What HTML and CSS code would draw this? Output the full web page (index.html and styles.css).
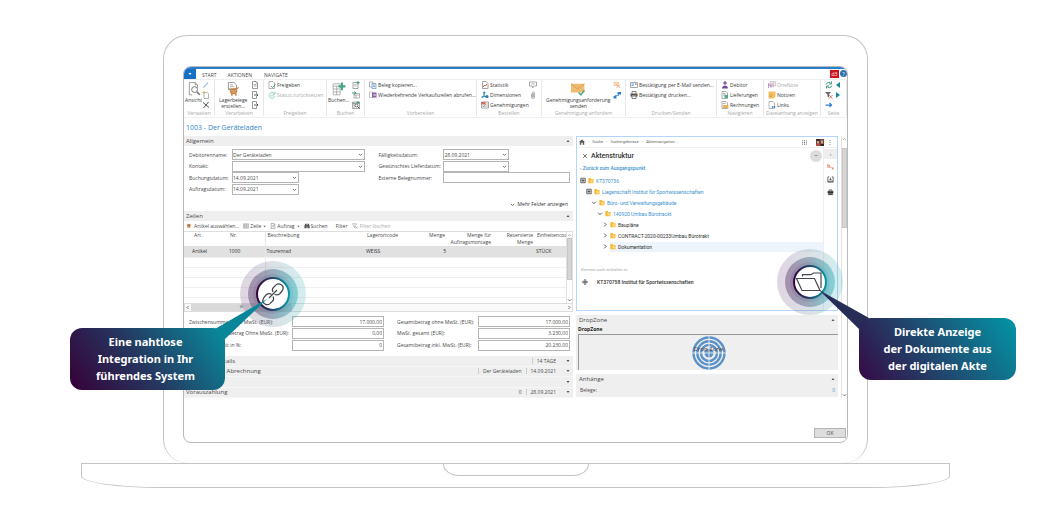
FILE: index.html
```html
<!DOCTYPE html>
<html lang="de">
<head>
<meta charset="utf-8">
<title>1003 - Der Geräteladen</title>
<link rel="stylesheet" href="styles.css">
</head>
<body>
<svg class="defs" aria-hidden="true">
  <defs>
    <linearGradient id="ring" x1="0" y1="0" x2="1" y2="0"><stop offset="0" stop-color="#35063e"/><stop offset=".5" stop-color="#24466c"/><stop offset="1" stop-color="#0797a6"/></linearGradient>
    <linearGradient id="mid" x1="0" y1="0" x2="1" y2="0"><stop offset="0" stop-color="#6d4377"/><stop offset=".5" stop-color="#58748f"/><stop offset="1" stop-color="#35b7be"/></linearGradient>
  </defs>
  <symbol id="chev" viewBox="0 0 8 8"><path d="M1.500 3 4 5.500 6.500 3" fill="none" stroke="#555" stroke-width="1.300"/></symbol>
  <symbol id="chevr" viewBox="0 0 8 8"><path d="M3 1.500 5.500 4 3 6.500" fill="none" stroke="#555" stroke-width="1.300"/></symbol>
  <symbol id="chevu" viewBox="0 0 8 8"><path d="M1.500 5.500 4 3l2.500 2.500" fill="none" stroke="#888" stroke-width="1.100"/></symbol>
  <symbol id="up" viewBox="0 0 8 8"><path d="M1 6 4 2l3 4z" fill="#555"/></symbol>
  <symbol id="down" viewBox="0 0 8 8"><path d="M1 2 4 6l3-4z" fill="#555"/></symbol>
  <symbol id="doc" viewBox="0 0 16 16"><path d="M3 1h7l3 3v11H3z" fill="#fff" stroke="#666" stroke-width="1.300"/><path d="M10 1v3h3M5 7h6M5 10h6" fill="none" stroke="#666"/></symbol>
  <symbol id="docgo" viewBox="0 0 16 16"><path d="M11 5V1H3v14h8v-4" fill="#fff" stroke="#666" stroke-width="1.300"/><path d="M6 8h8M11 5l3 3-3 3" fill="none" stroke="#444" stroke-width="1.700"/></symbol>
  <symbol id="docgreen" viewBox="0 0 16 16"><path d="M2 3h10v12H2z" fill="#fff" stroke="#777" stroke-width="1.300"/><path d="M4 7h5M4 10h5" stroke="#777"/><path d="M12 0v7M8.500 3.500h7" stroke="#3c9b76" stroke-width="2"/></symbol>
  <symbol id="postsend" viewBox="0 0 16 16"><path d="M4 5h11v9H4zM4 8h11M8 8v6" fill="#fff" stroke="#888" stroke-width="1.200"/><path d="M0 4h8M5 1l3 3-3 3" fill="none" stroke="#3c9b76" stroke-width="2"/></symbol>
  <symbol id="preview" viewBox="0 0 16 16"><path d="M1 2h14v13H1zM4 2v13M1 5h14" fill="#fff" stroke="#777" stroke-width="1.200"/><circle cx="9" cy="9" r="3" fill="#fff" stroke="#444" stroke-width="1.500"/><path d="M11 11l4 4" stroke="#444" stroke-width="2"/><path d="M12 0v6M9 3h6" stroke="#3c9b76" stroke-width="1.800"/></symbol>
  <symbol id="doccheck" viewBox="0 0 16 16"><path d="M2 1h8l3 3v11H2z" fill="#fff" stroke="#888" stroke-width="1.300"/><path d="M6 10l3 3 6-6" fill="none" stroke="#3c9b76" stroke-width="2"/></symbol>
  <symbol id="undo" viewBox="0 0 16 16"><path d="M13 5a6 6 0 1 0 1 5M14 1v5H9M5 8l3 3 6-7" fill="none" stroke="#8fcbb0" stroke-width="1.700"/></symbol>
  <symbol id="view" viewBox="0 0 24 24"><path d="M4 1h10l4 4v5M9 22H4V1M14 1v4h4" fill="#fff" stroke="#777" stroke-width="1.200"/><circle cx="13" cy="13" r="5" fill="#fff" stroke="#666" stroke-width="1.500"/><path d="M17 17l5 5" stroke="#666" stroke-width="2.500"/></symbol>
  <symbol id="pencil" viewBox="0 0 16 16"><path d="M3 13 12 3" stroke="#a5c6e2" stroke-width="2.500"/></symbol>
  <symbol id="new" viewBox="0 0 16 16"><path d="M4 3h6l3 3v9H4z" fill="#fff" stroke="#888" stroke-width="1.300"/><path d="M4 0v6M1 3h6" stroke="#eaa658" stroke-width="1.800"/></symbol>
  <symbol id="del" viewBox="0 0 16 16"><path d="M2 3l12 10M13 2 3 14" stroke="#555" stroke-width="2"/></symbol>
  <symbol id="store" viewBox="0 0 24 24"><path d="M4 1h10l4 4v8H4z" fill="#fff" stroke="#777" stroke-width="1.300"/><path d="M7 5h5M7 8h7" stroke="#777"/><path d="M5 12h14l3-3M7 15h12l-2 5H9z" fill="#e0a06a" stroke="#b8702f" stroke-width="1.500"/><circle cx="10" cy="22" r="1.500" fill="#b8702f"/><circle cx="17" cy="22" r="1.500" fill="#b8702f"/></symbol>
  <symbol id="post" viewBox="0 0 24 24"><path d="M2 3h12v19H2zM2 7h12M8 7v15M2 12h12M2 17h12" fill="#fff" stroke="#999" stroke-width="1.200"/><path d="M17 1v13M11 7.500h12" stroke="#45a883" stroke-width="3.500"/></symbol>
  <symbol id="copy" viewBox="0 0 16 16"><path d="M1 2h7v10H1z" fill="#fff" stroke="#888" stroke-width="1.200"/><path d="M6 5h8v10H6zM8 8h4M8 11h4" fill="#e5effa" stroke="#4a86bd" stroke-width="1.200"/></symbol>
  <symbol id="recur" viewBox="0 0 16 16"><path d="M1 2h6v11H1z" fill="#fff" stroke="#888"/><path d="M6 3h9v10H6z" fill="#8b5fa8"/><path d="M8 8h5M11 6l2 2-2 2" fill="none" stroke="#fff" stroke-width="1.300"/></symbol>
  <symbol id="stat" viewBox="0 0 16 16"><path d="M3 1h7l4 4v10H3z" fill="#fff" stroke="#777" stroke-width="1.300"/><path d="M4 12l3-4 2 2 3-4" fill="none" stroke="#d6533a" stroke-width="2"/></symbol>
  <symbol id="dim" viewBox="0 0 16 16"><path d="M6 2v8l-4 3M6 10l8 3" fill="none" stroke="#2c7faa" stroke-width="2.200"/><circle cx="7" cy="3" r="2" fill="#2c7faa"/><circle cx="3" cy="12" r="2.200" fill="#5aa7c9"/><circle cx="12" cy="11" r="3" fill="#2c7faa"/></symbol>
  <symbol id="appr" viewBox="0 0 16 16"><path d="M1 2h14v12H1z" fill="#fff" stroke="#777" stroke-width="1.300"/><path d="M1 2h8v5H1z" fill="#d66a4c"/><path d="M9 6h5M7 10h7" stroke="#777"/><path d="M3 9l2 3 4-5" fill="none" stroke="#444"/></symbol>
  <symbol id="bubble" viewBox="0 0 16 16"><path d="M1 2h14v8H9l-1.500 4L6 10H1zM5 6h6" fill="none" stroke="#888" stroke-width="1.400"/></symbol>
  <symbol id="clip" viewBox="0 0 16 16"><path d="M5 5v7a3 3 0 0 0 6 0V4a2 2 0 0 0-4 0v8h2V5" fill="none" stroke="#888" stroke-width="1.300"/></symbol>
  <symbol id="mail" viewBox="0 0 24 24"><path d="M0 3h23v15H0z" fill="#efbd72"/><path d="M0 3l11.500 9L23 3" fill="none" stroke="#d39b50" stroke-width="1.500"/><path d="M13 18l4 4 6-8" fill="none" stroke="#45a883" stroke-width="2.500"/></symbol>
  <symbol id="cancel" viewBox="0 0 16 16"><path d="M2 2h9v7H2z" fill="#f8d9b4" stroke="#e9b98d"/><path d="M7 7l7 7M14 7l-7 7" stroke="#ef9a78" stroke-width="1.600"/></symbol>
  <symbol id="flow" viewBox="0 0 16 16"><path d="M4 12V9h7V5" fill="none" stroke="#3d88ca" stroke-width="1.500"/><path d="M1 10h6v5H1zM9 2h7v5H9z" fill="#2c80cc"/></symbol>
  <symbol id="sendmail" viewBox="0 0 16 16"><path d="M1 3h14v10H1z" fill="#fff" stroke="#777" stroke-width="1.300"/><path d="M3 6h5M3 9h4" stroke="#2c80cc" stroke-width="1.500"/><path d="M10 5h3v3h-3z" fill="#888"/></symbol>
  <symbol id="print" viewBox="0 0 16 16"><path d="M4 5V1h8v4M4 10h8v5H4z" fill="#fff" stroke="#444" stroke-width="1.300"/><path d="M1 5h14v6h-3v-2H4v2H1z" fill="#555"/></symbol>
  <symbol id="person" viewBox="0 0 16 16"><circle cx="8" cy="4" r="3.500" fill="#8a5ca6"/><path d="M2 15c0-8 12-8 12 0z" fill="#7a4a9a"/></symbol>
  <symbol id="ship" viewBox="0 0 16 16"><path d="M2 1h8l3 3v11H2zM4 5h5M4 8h5" fill="#fff" stroke="#777" stroke-width="1.200"/><path d="M7 8h7v6H7z" fill="#4eab84"/></symbol>
  <symbol id="bill" viewBox="0 0 16 16"><path d="M2 1h8l3 3v11H2zM4 5h5" fill="#fff" stroke="#777" stroke-width="1.200"/><path d="M4 8h11v6H4z" fill="#edb15c"/></symbol>
  <symbol id="onenote" viewBox="0 0 16 16"><path d="M4 1h11v9H4z" fill="#eee" stroke="#aaa"/><path d="M1 14V5l5 8V5M10 3v9" fill="none" stroke="#b07cb4" stroke-width="1.500"/></symbol>
  <symbol id="note" viewBox="0 0 16 16"><path d="M1 1h14v10l-4 4H1z" fill="#f3c063"/><path d="M3 8h7M3 11h5" stroke="#b98a3a"/></symbol>
  <symbol id="linkdoc" viewBox="0 0 16 16"><path d="M2 1h8l3 3v11H2z" fill="#fff" stroke="#888" stroke-width="1.200"/><path d="M7 12h8M9 10v4M13 10v4" stroke="#2c80cc" stroke-width="1.500"/></symbol>
  <symbol id="refresh" viewBox="0 0 16 16"><path d="M13 6A6 6 0 0 0 2 7M3 10a6 6 0 0 0 11-1M13 1v5H8M3 15v-5h5" fill="none" stroke="#45a07c" stroke-width="2"/></symbol>
  <symbol id="nofilter" viewBox="0 0 16 16"><path d="M0 2h12L8 7v6L5 11V7z" fill="#666"/><path d="M8 8l7 7M15 8l-7 7" stroke="#dd6547" stroke-width="1.700"/></symbol>
  <symbol id="clearfilter" viewBox="0 0 16 16"><path d="M1 2h11L8 7v6L5 11V7zM9 9l6 6M15 9l-6 6" fill="none" stroke="#999" stroke-width="1.500"/></symbol>
  <symbol id="goto" viewBox="0 0 16 16"><path d="M1 8h12M9 4l4 4-4 4" fill="none" stroke="#2c80cc" stroke-width="2.500"/></symbol>
  <symbol id="prev" viewBox="0 0 16 16"><path d="M12 2v12L4 8z" fill="#1d869c"/></symbol>
  <symbol id="next" viewBox="0 0 16 16"><path d="M4 2v12l8-6z" fill="#1d869c"/></symbol>
  <symbol id="grid" viewBox="0 0 16 16"><path d="M1 2h14v12H1zM1 5h14M1 8h14M1 11h14M5 2v12M10 2v12" fill="none" stroke="#777"/></symbol>
  <symbol id="pick" viewBox="0 0 16 16"><path d="M3 4h10l-2 9H3z" fill="#e9ab78"/><path d="M2 6l5-4 6 3-4 6z" fill="#b5713f"/></symbol>
  <symbol id="binoc" viewBox="0 0 16 16"><path d="M3 2h4v12H1V8zM9 2h4l2 6v6H9zM6 6h4v3H6z" fill="#555"/></symbol>
  <symbol id="home" viewBox="0 0 16 16"><path d="M8 1 0 8h2v7h4v-5h4v5h4V8h2z" fill="#555"/></symbol>
  <symbol id="apps" viewBox="0 0 16 16"><path d="M2 1v14M8 1v14M14 1v14" stroke="#666" stroke-width="3" stroke-dasharray="3 2.500"/></symbol>
  <symbol id="plus" viewBox="0 0 16 16"><path d="M2 2h12v12H2z" fill="#ddd" stroke="#444" stroke-width="2"/><path d="M8 4v8M4 8h8" stroke="#444" stroke-width="2"/></symbol>
  <symbol id="folder" viewBox="0 0 16 16"><path d="M1 1h7v14H1z" fill="#f8b92d"/><path d="M7 4h8v11H7z" fill="#fac550"/><path d="M8 7v4h4" fill="none" stroke="#fff" stroke-width="1.500"/></symbol>
  <symbol id="dia" viewBox="0 0 16 16"><path d="M8 0l4 4H4zM8 16l-4-4h8zM0 8l4-4v8zM16 8l-4-4v8z" fill="#444"/><path d="M4 5h8v6H4z" fill="#777"/></symbol>
  <symbol id="cross" viewBox="0 0 16 16"><path d="M3 3l10 10M13 3 3 13" stroke="#444" stroke-width="2"/></symbol>
  <symbol id="tag" viewBox="0 0 16 16"><path d="M2 2v8h4V5H2M8 9l3 3M11 12h4M13 10v5" fill="none" stroke="#ee7b58" stroke-width="1.900"/></symbol>
  <symbol id="inbox" viewBox="0 0 16 16"><path d="M5 2H2v12h12V2h-3M8 4v5M5.500 7 8 9.500 10.500 7M2 12h12" fill="none" stroke="#333" stroke-width="1.600"/></symbol>
  <symbol id="case" viewBox="0 0 16 16"><path d="M2 5h12v4H2zM3 10h10v3H3z" fill="#333" stroke="#333"/><path d="M5 5V2h6v3" fill="none" stroke="#333" stroke-width="1.500"/></symbol>
</svg>

<main class="stage">
  <div class="lid">
    <div class="screen">
      <div class="strip"></div>
      <nav class="tabs">
        <button class="app" aria-label="Menü"><svg><use href="#down"/></svg></button>
        <button class="tab active">START</button>
        <button class="tab">AKTIONEN</button>
        <button class="tab">NAVIGATE</button>
        <span class="badge">d3</span>
        <button class="help" aria-label="Hilfe">?</button>
      </nav>

      <div class="ribbon">
        <section class="group">
          <div class="tools">
            <button class="big"><svg><use href="#view"/></svg>Ansicht</button>
            <div class="stack"><button aria-label="Bearbeiten"><svg><use href="#pencil"/></svg></button><button aria-label="Neu"><svg><use href="#new"/></svg></button><button aria-label="Löschen"><svg><use href="#del"/></svg></button></div>
          </div>
          <h2>Verwalten</h2>
        </section>
        <section class="group">
          <div class="tools">
            <button class="big"><svg><use href="#store"/></svg>Lagerbelege<br>erstellen...</button>
            <div class="stack"><button aria-label="Beleg"><svg><use href="#doc"/></svg></button><button aria-label="Eingang"><svg><use href="#docgo"/></svg></button><button aria-label="Ausgang"><svg><use href="#docgo"/></svg></button></div>
          </div>
          <h2>Verarbeiten</h2>
        </section>
        <section class="group">
          <div class="tools"><div class="stack"><button><svg><use href="#doccheck"/></svg>Freigeben</button><button class="off"><svg><use href="#undo"/></svg>Status zurücksetzen</button></div></div>
          <h2>Freigeben</h2>
        </section>
        <section class="group">
          <div class="tools">
            <button class="big"><svg><use href="#post"/></svg>Buchen...</button>
            <div class="stack"><button aria-label="Buchen und neu"><svg><use href="#docgreen"/></svg></button><button aria-label="Buchen und senden"><svg><use href="#postsend"/></svg></button><button aria-label="Vorschau"><svg><use href="#preview"/></svg></button></div>
          </div>
          <h2>Buchen</h2>
        </section>
        <section class="group">
          <div class="tools"><div class="stack"><button><svg><use href="#copy"/></svg>Beleg kopieren...</button><button><svg><use href="#recur"/></svg>Wiederkehrende Verkaufszeilen abrufen...</button></div></div>
          <h2>Vorbereiten</h2>
        </section>
        <section class="group">
          <div class="tools">
            <div class="stack"><button><svg><use href="#stat"/></svg>Statistik</button><button><svg><use href="#dim"/></svg>Dimensionen</button><button><svg><use href="#appr"/></svg>Genehmigungen</button></div>
            <div class="stack"><button aria-label="Kommentare"><svg><use href="#bubble"/></svg></button><button aria-label="Anhang"><svg><use href="#clip"/></svg></button></div>
          </div>
          <h2>Bestellen</h2>
        </section>
        <section class="group">
          <div class="tools">
            <button class="big"><svg><use href="#mail"/></svg>Genehmigungsanforderung<br>senden</button>
            <div class="stack"><button aria-label="Anforderung stornieren"><svg><use href="#cancel"/></svg></button><button aria-label="Workflow"><svg><use href="#flow"/></svg></button></div>
          </div>
          <h2>Genehmigung anfordern</h2>
        </section>
        <section class="group">
          <div class="tools"><div class="stack"><button><svg><use href="#sendmail"/></svg>Bestätigung per E-Mail senden...</button><button><svg><use href="#print"/></svg>Bestätigung drucken...</button></div></div>
          <h2>Drucken/Senden</h2>
        </section>
        <section class="group">
          <div class="tools"><div class="stack"><button><svg><use href="#person"/></svg>Debitor</button><button><svg><use href="#ship"/></svg>Lieferungen</button><button><svg><use href="#bill"/></svg>Rechnungen</button></div></div>
          <h2>Navigieren</h2>
        </section>
        <section class="group">
          <div class="tools"><div class="stack"><button class="off"><svg><use href="#onenote"/></svg>OneNote</button><button><svg><use href="#note"/></svg>Notizen</button><button><svg><use href="#linkdoc"/></svg>Links</button></div></div>
          <h2>Dateianhang anzeigen</h2>
        </section>
        <section class="group">
          <div class="tools">
            <div class="stack"><button aria-label="Aktualisieren"><svg><use href="#refresh"/></svg></button><button aria-label="Filter löschen"><svg><use href="#nofilter"/></svg></button><button aria-label="Gehe zu"><svg><use href="#goto"/></svg></button></div>
            <div class="stack"><button aria-label="Zurück"><svg><use href="#prev"/></svg></button><button aria-label="Weiter"><svg><use href="#next"/></svg></button></div>
          </div>
          <h2>Seite</h2>
        </section>
      </div>

      <h1 class="title">1003 - Der Geräteladen</h1>

      <div class="content">
        <div class="left">
          <header class="bar"><span>Allgemein</span><svg><use href="#up"/></svg></header>
          <form class="general">
            <div class="fields">
              <label for="deb">Debitorenname:</label><span class="pick"><select id="deb"><option>Der Geräteladen</option></select><svg><use href="#chev"/></svg></span>
              <label for="kon">Kontakt:</label><span class="pick"><select id="kon"><option></option></select><svg><use href="#chev"/></svg></span>
              <label for="buc">Buchungsdatum:</label><span class="pick half"><select id="buc"><option>14.09.2021</option></select><svg><use href="#chev"/></svg></span>
              <label for="auf">Auftragsdatum:</label><span class="pick half"><select id="auf"><option>14.09.2021</option></select><svg><use href="#chev"/></svg></span>
            </div>
            <div class="fields second">
              <label for="fae">Fälligkeitsdatum:</label><span class="pick half"><select id="fae"><option>28.09.2021</option></select><svg><use href="#chev"/></svg></span>
              <label for="lie">Gewünschtes Lieferdatum:</label><span class="pick half"><select id="lie"><option></option></select><svg><use href="#chev"/></svg></span>
              <label for="ext">Externe Belegnummer:</label><input id="ext" type="text">
            </div>
          </form>
          <button class="more"><svg><use href="#chev"/></svg>Mehr Felder anzeigen</button>

          <header class="bar"><span>Zeilen</span><svg><use href="#up"/></svg></header>
          <div class="toolbar">
            <button><svg><use href="#pick"/></svg>Artikel auswählen...</button>
            <button><svg><use href="#grid"/></svg>Zeile<svg class="caret"><use href="#down"/></svg></button>
            <button><svg><use href="#doc"/></svg>Auftrag<svg class="caret"><use href="#down"/></svg></button>
            <button><svg><use href="#binoc"/></svg>Suchen</button>
            <button class="gap">Filter</button>
            <button class="off"><svg><use href="#clearfilter"/></svg>Filter löschen</button>
          </div>
          <div class="lines">
            <div class="sheet">
              <table>
                <colgroup><col class="c-art"><col class="c-nr"><col class="c-be"><col class="c-la"><col class="c-me"><col class="c-mf"><col class="c-re"><col class="c-ei"></colgroup>
                <thead><tr><th>Art</th><th>Nr.</th><th>Beschreibung</th><th>Lagerortcode</th><th class="num">Menge</th><th class="num">Menge für Auftragsmontage</th><th class="num">Reservierte Menge</th><th class="clipped">Einheitencode</th></tr></thead>
                <tbody>
                  <tr class="selected"><td>Artikel</td><td>1000</td><td>Tourenrad</td><td>WEISS</td><td class="num">5</td><td></td><td></td><td>STÜCK</td></tr>
                  <tr><td></td><td></td><td></td><td></td><td></td><td></td><td></td><td></td></tr>
                  <tr><td></td><td></td><td></td><td></td><td></td><td></td><td></td><td></td></tr>
                  <tr><td></td><td></td><td></td><td></td><td></td><td></td><td></td><td></td></tr>
                  <tr><td></td><td></td><td></td><td></td><td></td><td></td><td></td><td></td></tr>
                </tbody>
              </table>
            </div>
            <div class="vbar"><svg><use href="#chevu"/></svg><i class="thumb"></i><svg><use href="#chev"/></svg></div>
          </div>
          <div class="hbar"><svg class="flip"><use href="#chevr"/></svg><i class="thumb">III</i><svg><use href="#chevr"/></svg></div>

          <form class="totals">
            <label for="t1">Zwischensumme Ohne MwSt. (EUR):</label><input id="t1" type="text" value="17.000,00">
            <label class="b" for="t4">Gesamtbetrag ohne MwSt. (EUR):</label><input id="t4" type="text" value="17.000,00">
            <label for="t2">Rechnungsrabattbetrag Ohne MwSt. (EUR):</label><input id="t2" type="text" value="0,00">
            <label class="b" for="t5">MwSt. gesamt (EUR):</label><input id="t5" type="text" value="3.230,00">
            <label for="t3">Rechnungsrabatt in %:</label><input id="t3" type="text" value="0">
            <label class="b" for="t6">Gesamtbetrag inkl. MwSt. (EUR):</label><input id="t6" type="text" value="20.230,00">
          </form>

          <div class="fasttabs">
            <div class="fast"><span class="name">Rechnungsdetails</span><span class="val">14 TAGE</span><svg><use href="#down"/></svg></div>
            <div class="fast"><span class="name">Lieferung und Abrechnung</span><span class="val">Der Geräteladen</span><span class="val">14.09.2021</span><svg><use href="#down"/></svg></div>
            <div class="fast"><span class="name"></span><svg><use href="#down"/></svg></div>
            <div class="fast"><span class="name">Vorauszahlung</span><span class="val none">0</span><span class="val">28.09.2021</span><svg><use href="#down"/></svg></div>
          </div>
        </div>

        <div class="right">
          <section class="d3">
            <div class="crumbs"><svg><use href="#home"/></svg><span>›</span><a href="#">Suche</a><span>›</span><a href="#">Suchergebnisse</a><span>›</span><a href="#">Aktennavigation ...</a><svg class="apps"><use href="#apps"/></svg><svg class="avatar" viewBox="0 0 16 14"><path fill="#6b4740" d="M0 0h16v14H0z"/><path fill="#d8a183" d="M2 4h4v5H2zM10 3h4v6h-4z"/><path fill="#2d2630" d="M1 0h6v4H1zM9 10h7v4H9z"/><path fill="#b84a3a" d="M0 10h8v4H0z"/></svg><span class="dots">⋮</span></div>
            <div class="d3main">
              <div class="akten">
                <div class="akhead"><button aria-label="Schließen"><svg><use href="#cross"/></svg></button><h2>Aktenstruktur</h2><button class="round" aria-label="Mehr">•••</button></div>
                <a class="back" href="#">‹ Zurück zum Ausgangspunkt</a>
                <ul class="tree">
                  <li class="l0"><svg><use href="#plus"/></svg><svg><use href="#folder"/></svg><a href="#">KT370736</a></li>
                  <li class="l1"><svg><use href="#plus"/></svg><svg><use href="#folder"/></svg><a href="#">Liegenschaft Institut für Sportwissenschaften</a></li>
                  <li class="l2"><svg><use href="#chev"/></svg><svg><use href="#folder"/></svg><a href="#">Büro- und Verwaltungsgebäude</a></li>
                  <li class="l3"><svg><use href="#chev"/></svg><svg><use href="#folder"/></svg><a href="#">140920 Umbau Bürotrackt</a></li>
                  <li class="l4"><svg><use href="#chevr"/></svg><div><svg><use href="#folder"/></svg><span>Baupläne</span></div></li>
                  <li class="l4"><svg><use href="#chevr"/></svg><div><svg><use href="#folder"/></svg><span>CONTRACT-2020-00233Umbau Bürotrakt</span></div></li>
                  <li class="l4"><svg><use href="#chevr"/></svg><div class="sel"><svg><use href="#folder"/></svg><span>Dokumentation</span></div></li>
                </ul>
                <p class="also">Element auch enthalten in:</p>
                <p class="item"><svg><use href="#dia"/></svg>KT370758 Institut für Sportwissenschaften</p>
              </div>
              <aside class="side"><button class="first" aria-label="Ausblenden">›</button><button aria-label="Merkmale"><svg><use href="#tag"/></svg></button><button aria-label="Eingang"><svg><use href="#inbox"/></svg></button><button aria-label="Mappe"><svg><use href="#case"/></svg></button></aside>
            </div>
          </section>
          <section class="panel">
            <header class="bar"><span>DropZone</span><svg><use href="#up"/></svg></header>
            <h3>DropZone</h3>
            <div class="drop">
              <svg viewBox="0 0 34 34"><g fill="none" stroke="#5a91c6" stroke-width="2.400"><circle cx="17" cy="17" r="15.500"/><circle cx="17" cy="17" r="11.700"/><circle cx="17" cy="17" r="8"/></g><circle cx="17" cy="17" r="4.500" fill="#5a91c6"/><path d="M17 0v34M0 17h34" stroke="#f4f6f8" stroke-width=".8"/></svg>
              <span>Drop Zone</span>
            </div>
          </section>
          <section class="panel">
            <header class="bar"><span>Anhänge</span><svg><use href="#up"/></svg></header>
            <p class="belege"><span>Belege:</span><a href="#">0</a></p>
          </section>
        </div>

        <div class="vbar page"><svg><use href="#chevu"/></svg><i class="thumb"></i><svg><use href="#chev"/></svg></div>
      </div>
      <footer class="foot"><button class="ok">OK</button></footer>
    </div>
  </div>
  <div class="base"><div class="notch"></div></div>

  <div class="callout one">
    <svg viewBox="0 0 236 129"><circle cx="203" cy="33" r="33" fill="url(#mid)" opacity=".22"/><circle cx="203" cy="33" r="25" fill="url(#mid)" opacity=".5"/><circle cx="203" cy="33" r="20" fill="url(#mid)" opacity=".2"/><circle cx="203" cy="33" r="16" fill="#fff" stroke="url(#ring)" stroke-width="2"/><g fill="none" stroke="#44474b" stroke-width="1.200" stroke-linejoin="round"><path d="M203 31c-1-2-.8-3.500.4-4.500l2.600-2.600c2-1.600 3.500-1.400 5-.4 2 1.200 2.500 3 2 4.500-.5 2-2 3.500-3.500 5-1.500 1-3.500 1-5 .2M203 35.500c1 2 .8 3.500-.4 4.500l-2.600 2.600c-2 1.600-3.500 1.400-5 .4-2-1.200-2.500-3-2-4.500.5-2 2-3.500 3.500-5 1.500-1 3.500-1 5-.2M199 37l8-8"/></g><path d="M145 68 197 38 155 78z" fill="#0a8699"/></svg>
    <p>Eine nahtlose<br>Integration in Ihr<br>führendes System</p>
  </div>
  <div class="callout two">
    <svg viewBox="0 0 240 131"><circle cx="34" cy="33" r="33" fill="url(#mid)" opacity=".22"/><circle cx="34" cy="33" r="25" fill="url(#mid)" opacity=".5"/><circle cx="34" cy="33" r="20" fill="url(#mid)" opacity=".2"/><circle cx="34" cy="33" r="16" fill="#fff" stroke="url(#ring)" stroke-width="2"/><path d="M26.500 27.500v-1.800h8.500l2.500-1.700h7.500v15M20.500 29.500h18l5.500 12H26z" fill="none" stroke="#44474b" stroke-width="1.200"/><path d="M93 69 43 41 83 80z" fill="#262e57"/></svg>
    <p>Direkte Anzeige<br>der Dokumente aus<br>der digitalen Akte</p>
  </div>
</main>
</body>
</html>
```
FILE: styles.css
```css
* { box-sizing: border-box; margin: 0; padding: 0; }
body { background: #fff; color: #4a4a4a; font: 5px/6px "Open Sans", "Noto Sans", sans-serif; }
button, input, select { font: inherit; color: inherit; background: none; border: 0; border-radius: 0; appearance: none; }
button { display: flex; align-items: center; white-space: nowrap; }
a { color: #3e93d0; text-decoration: none; }
svg { flex: none; width: 6px; height: 6px; display: block; }
h2, h3 { font: inherit; }
ul { list-style: none; }
.defs { position: absolute; width: 0; height: 0; }

/* Laptop */
.stage { position: relative; padding: 35px 90px 0 81px; }
.lid { margin: 0 82px; padding: 30px 19px 20px; border: 1px solid #c4c4c4; border-bottom: 0; border-radius: 24px; }
.screen { border: 1px solid #b9b9b9; border-radius: 8px; overflow: hidden; }
.base { height: 25px; border: 1px solid #c4c4c4; border-radius: 0 0 80px 80px / 0 0 12px 12px; }
.notch { width: 146px; height: 12px; margin: 0 auto; border: 1px solid #c4c4c4; border-top: 0; border-radius: 0 0 16px 16px / 0 0 12px 12px; }

/* Tabs */
.strip { height: 2px; background: #2a7fc9; }
.tabs { display: flex; height: 11px; align-items: stretch; border-bottom: 1px solid #eee; }
.app { width: 12px; justify-content: center; background: #1770c4; }
.app svg { width: 4px; height: 4px; filter: brightness(4); }
.tab { padding: 2px 12px 0 0; }
.tab.active { padding: 2px 11px 0 6px; }
.badge { margin: 1px 1px 1px auto; width: 9px; background: #d0121b; color: #fff; text-align: center; line-height: 8px; }
.help { width: 7px; height: 7px; margin: 1px 0; justify-content: center; border-radius: 50%; background: #2f6fb0; color: #fff; }

/* Ribbon */
.ribbon { display: grid; grid-template-columns: 31fr 49fr 63fr 38fr 112fr 65fr 84fr 91fr 47fr 57fr 26fr; border-bottom: 1px solid #f1f1f1; color: #3c3c3c; }
.group { display: flex; flex-direction: column; min-width: 0; border-right: 1px solid #e8e8e8; margin-bottom: 1px; }
.group h2 { text-align: center; color: #aaa; white-space: nowrap; }
.tools { display: flex; height: 30px; padding: 0 4px; justify-content: space-between; }
.stack { display: flex; flex-direction: column; }
.stack button { height: 10px; gap: 1px; }
.stack svg { width: 8px; height: 8px; }
.big { flex-direction: column; justify-content: flex-start; padding-top: 2px; line-height: 6px; text-align: center; }
.big svg { width: 14px; height: 14px; margin-bottom: 1px; }
.group:first-child .tools, .group:nth-child(4) .tools { padding-left: 1px; }
.off, .ribbon .off { color: #aaa; }

.title { height: 18px; padding-left: 2px; font-size: 7px; line-height: 19px; font-weight: 400; color: #2f86c8; }

/* Content columns */
.content { display: grid; grid-template-columns: 389fr 262fr 6px; column-gap: 3px; }
.left, .right { min-width: 0; }
.bar { display: flex; align-items: center; justify-content: space-between; height: 10px; padding: 0 3px 0 2px; background: #efefef; font-size: 6px; }
.bar svg, .fast svg { width: 4px; height: 4px; }
.general { display: grid; grid-template-columns: 176fr 191fr; column-gap: 13px; padding: 3px 3px 0 5px; }
.fields { display: grid; grid-template-columns: 43px 1fr; grid-template-rows: repeat(4, 1fr); height: 46px; align-items: center; }
.second { grid-template-columns: 65px 1fr; }
.fields label, .totals label { white-space: nowrap; }
.pick { display: grid; align-items: center; height: 11px; border: 1px solid #b5b5b5; }
.pick select, .pick svg { grid-area: 1 / 1; }
.pick select { height: 9px; width: 100%; }
.pick svg { justify-self: end; margin-right: 1px; width: 5px; height: 5px; pointer-events: none; }
.half { width: 50%; }
.second .half { width: 52%; }
.fields input { width: 100%; height: 11px; border: 1px solid #b5b5b5; }
.more { margin: 4px 5px 2px auto; height: 10px; gap: 3px; color: #333; }
.more svg { width: 5px; height: 5px; }

/* Sales lines */
.toolbar { display: flex; align-items: center; height: 10px; gap: 4px; padding-left: 2px; }
.toolbar button { gap: 2px; }
.toolbar button:nth-child(n+2) { gap: 1px; }
.toolbar .gap { margin: 0 1px 0 4px; }
.toolbar .caret { width: 3px; height: 3px; margin-left: 1px; }
.lines { display: flex; height: 73px; border: 1px solid #ddd; border-width: 1px 0; }
.sheet { flex: 1; min-width: 0; overflow: hidden; }
table { width: 100%; border-collapse: collapse; table-layout: fixed; }
th { height: 14px; padding: 0 2px; font-weight: 400; text-align: left; vertical-align: top; line-height: 7px; overflow: hidden; }
td { height: 10px; padding: 0 1px; border-bottom: 1px solid #f0f0f0; }
.num { text-align: right; }
th:first-child { padding-left: 10px; }
td:first-child { padding-left: 8px; }
th:nth-child(2), td:nth-child(2) { border-right: 1px solid #e6e6e6; }
.clipped { white-space: nowrap; }
.selected td { height: 11px; background: #e1e1e1; color: #333; }
.c-art { width: 44px; }
.c-nr { width: 37px; }
.c-be { width: 100px; }
.c-la { width: 50px; }
.c-me { width: 32px; }
.c-mf { width: 46px; }
.c-re { width: 42px; }
.vbar { display: flex; flex-direction: column; align-items: center; width: 7px; border: 1px solid #e2e2e2; border-width: 0 1px; }
.vbar svg { width: 5px; height: 6px; }
.vbar .thumb { width: 100%; height: 42px; background: #d5d5d5; border: 1px solid #c6c6c6; margin-bottom: auto; }
.hbar { display: flex; align-items: center; height: 8px; border: 1px solid #ddd; border-top: 0; background: #fafafa; }
.hbar .thumb { width: 26%; height: 100%; margin-right: auto; background: #d9d9d9; text-align: center; font: 4px/6px "Open Sans", sans-serif; }
.hbar svg { width: 6px; height: 5px; }
.flip { transform: scaleX(-1); }

.totals { display: grid; grid-template-columns: 103px 92fr 94px 92fr; grid-template-rows: repeat(3, 1fr); height: 35px; margin: 4px 3px 5px 5px; align-items: center; }
.totals .b { padding-left: 13px; }
.totals input { width: 100%; height: 11px; padding-right: 1px; border: 1px solid #b5b5b5; text-align: right; }

.fasttabs { display: grid; grid-auto-rows: 1fr; height: 42px; }
.fast { display: flex; align-items: center; background: #efefef; border-bottom: 1px solid #f6f6f6; padding: 0 3px 0 2px; }
.name { font-size: 6px; margin-right: auto; }
.val { padding: 0 4px; border-left: 1px solid #ccc; }
.none { border: 0; }
.fast svg { margin-left: 6px; }

/* Document archive pane */
.right { display: flex; flex-direction: column; gap: 4px; }
.d3 { height: 175px; display: flex; flex-direction: column; border: 1px solid #b5d5fa; font-family: Roboto, sans-serif; }
.crumbs { display: flex; align-items: center; gap: 3px; height: 11px; padding: 0 4px 0 2px; font-size: 4px; color: #777; border-bottom: 1px solid #f0f0f0; }
.crumbs a { color: #666; }
.crumbs .apps { width: 5px; height: 5px; margin-left: auto; }
.crumbs .avatar { width: 8px; height: 7px; margin-left: 6px; }
.dots { font-size: 6px; color: #555; }
.d3main { display: flex; flex: 1; }
.akten { flex: 1; min-width: 0; }
.akhead { display: flex; align-items: center; height: 14px; padding: 2px 1px 0 5px; gap: 3px; }
.akhead h2 { font-size: 7px; font-weight: 500; color: #333; }
.round { width: 12px; height: 12px; margin-left: auto; justify-content: center; border-radius: 50%; background: #dcdcdc; font-size: 3px; color: #222; }
.back { display: block; height: 13px; padding-left: 3px; line-height: 13px; font-weight: 500; }
.tree li { display: flex; align-items: center; height: 11px; gap: 2px; }
.tree li div { flex: 1; display: flex; align-items: center; gap: 2px; height: 10px; color: #333; }
.tree svg { width: 6px; height: 7px; }
.tree .sel { background: #edf4fb; }
.l0 { padding-left: 3px; }
.l1 { padding-left: 9px; }
.l2 { padding-left: 14px; }
.l3 { padding-left: 20px; }
.l4 { padding-left: 25px; }
.also { padding: 15px 0 0 4px; font-size: 4px; color: #aaa; }
.item { display: flex; align-items: center; gap: 9px; padding: 6px 0 0 5px; font-weight: 500; color: #333; }
.side { width: 14px; border-left: 1px solid #eee; display: flex; flex-direction: column; align-items: center; }
.side button { height: 13px; }
.side .first { width: 100%; height: 10px; margin: 1px 0; justify-content: center; background: #eee; }
.side svg { width: 7px; height: 7px; }

.panel { background: #efefef; }
.panel .bar { padding: 0 3px; }
.panel h3 { padding-left: 2px; height: 9px; line-height: 9px; font-weight: 700; color: #222; }
.drop { display: grid; place-items: center; height: 36px; margin-left: 2px; border: 1px solid #999; border-width: 1px 0 0 1px; }
.drop svg, .drop span { grid-area: 1 / 1; }
.drop svg { width: 34px; height: 34px; }
.drop span { margin-bottom: 8px; font-size: 6px; line-height: 6px; color: #5b3f42; }
.belege { display: flex; justify-content: space-between; height: 13px; padding: 0 3px 0 4px; line-height: 13px; }
.page .thumb { height: 80px; margin-top: 6px; }

.foot { display: flex; justify-content: flex-end; padding: 30px 1px 4px; }
.ok { width: 32px; height: 10px; justify-content: center; background: #ddd; border: 1px solid #b5b5b5; }

/* Callouts */
.callout { position: absolute; }
.callout svg { width: 100%; height: auto; }
.callout p { position: absolute; bottom: 0; padding: 5px 0 6px; border-radius: 12px; color: #fff; font: 700 11px/17px "Noto Sans", sans-serif; text-align: center; white-space: nowrap; }
.one { left: 70px; top: 261px; width: 236px; }
.one p { left: 0; width: 155px; padding-right: 4px; background: linear-gradient(55deg, #35063c 5%, #25365f 45%, #0a8699 95%); }
.two { right: 24px; top: 249px; width: 240px; }
.two p { right: 0; width: 157px; background: linear-gradient(55deg, #331048 5%, #22416a 40%, #058fa1 95%); }
```
